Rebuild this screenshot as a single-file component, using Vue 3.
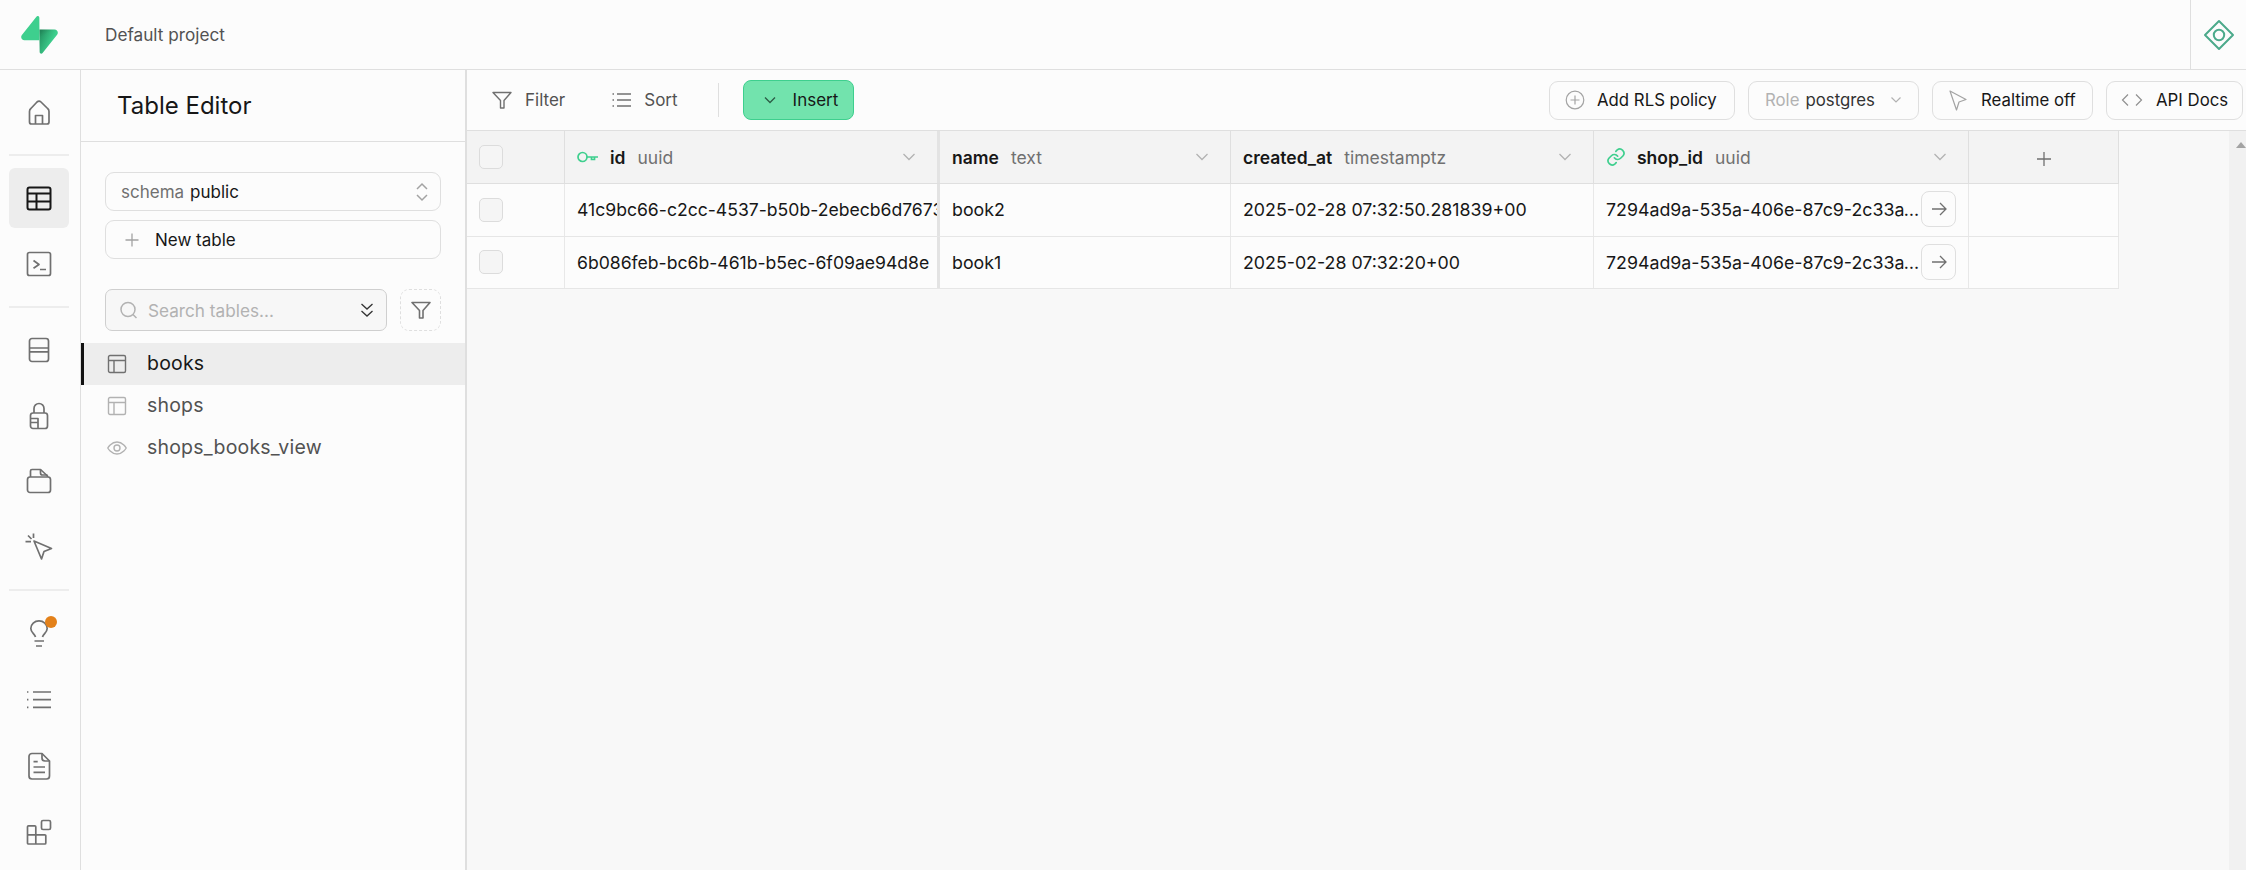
<script setup>
const rows = [
  { id: '41c9bc66-c2cc-4537-b50b-2ebecb6d7673', name: 'book2', created: '2025-02-28 07:32:50.281839+00', shop: '7294ad9a-535a-406e-87c9-2c33a1f0b6de' },
  { id: '6b086feb-bc6b-461b-b5ec-6f09ae94d8e', name: 'book1', created: '2025-02-28 07:32:20+00', shop: '7294ad9a-535a-406e-87c9-2c33a1f0b6de' }
]
</script>

<template>
  <div class="app">
    <header class="top">
      <div class="logo">
        <svg width="37" height="38" viewBox="0 0 109 113" fill="none">
          <defs>
            <linearGradient id="lg" x1="53.97" y1="54.97" x2="94.16" y2="71.83" gradientUnits="userSpaceOnUse">
              <stop stop-color="#249361" /><stop offset="1" stop-color="#3ECF8E" />
            </linearGradient>
            <linearGradient id="lg2" x1="36.16" y1="30.58" x2="54.48" y2="65.08" gradientUnits="userSpaceOnUse">
              <stop /><stop offset="1" stop-opacity="0" />
            </linearGradient>
          </defs>
          <path d="M63.7 110.3C60.85 113.9 55.05 111.9 54.98 107.3L53.97 40.06H99.19C107.38 40.06 111.95 49.52 106.86 55.94L63.7 110.3Z" fill="url(#lg)" />
          <path d="M63.7 110.3C60.85 113.9 55.05 111.9 54.98 107.3L53.97 40.06H99.19C107.38 40.06 111.95 49.52 106.86 55.94L63.7 110.3Z" fill="url(#lg2)" fill-opacity=".2" />
          <path d="M45.32 2.07C48.18 -1.53 53.97 .44 54.04 5.04L54.48 72.29H9.83C1.64 72.29 -2.93 62.83 2.17 56.42L45.32 2.07Z" fill="#3ECF8E" />
        </svg>
      </div>
      <div class="project">Default project</div>
      <div class="top-right">
        <svg width="32" height="32" viewBox="0 0 32 32" fill="none" stroke="#4caa8b" stroke-width="2"><path d="M16 2 30 16 16 30 2 16Z" stroke-linejoin="round" /><circle cx="16" cy="16" r="5.2" /></svg>
      </div>
    </header>

    <div class="body">
      <nav class="nav">
        <a class="nb"><svg class="ni" viewBox="0 0 28 28"><path d="M4.5 13.5c0-1.2.5-2.3 1.4-3L12 4c1.2-1.1 2.9-1.1 4 0l6.600 6.500c.9.700 1.400 1.800 1.400 3V24a2 2 0 0 1-2 2H6.500a2 2 0 0 1-2-2Z" /><path d="M10.500 26V17.500h7V26" /></svg></a>
        <i class="sep"></i>
        <div class="grp">
          <a class="nb on"><svg class="ni" viewBox="0 0 28 28"><rect x="2.500" y="3.500" width="23" height="22" rx="2" /><path d="M2.500 9.500h23M2.500 17.500h23M11.500 9.500v16" /></svg></a>
          <a class="nb"><svg class="ni" viewBox="0 0 28 28"><rect x="2.500" y="2.500" width="23" height="23" rx="2" /><path d="M8.500 10.500l5.500 4-5.500 3.700M15 19.500h6" /></svg></a>
        </div>
        <i class="sep"></i>
        <div class="grp g2">
          <a class="nb"><svg class="ni" viewBox="0 0 28 28"><rect x="4.500" y="2.500" width="19" height="23" rx="2.500" /><path d="M4.500 12h19M4.500 15.800h19" /></svg></a>
          <a class="nb"><svg class="ni" viewBox="0 0 28 28"><path d="M9 11V6.500a5 5 0 0 1 10 0V11" /><rect x="5.500" y="11" width="17" height="15.500" rx="2.500" /><path d="M6 16.500h7v9.500M6 20.500h7" /></svg></a>
          <a class="nb"><svg class="ni" viewBox="0 0 28 28"><rect x="2.500" y="10" width="23" height="15.500" rx="2.500" /><path d="M5.500 10V4a1.500 1.500 0 0 1 1.500-1.500h8.500l7 6.500v1" /><path d="M15.500 2.500V6a2 2 0 0 0 2 2h5" /></svg></a>
          <a class="nb"><svg class="ni" viewBox="0 0 28 28"><path d="M9 8l17.500 7.500-7.500 3-2.500 7.500Z" /><path d="M.5 8.700h5.500M3 2.500l3.500 3.500M8.500.5V5" /></svg></a>
        </div>
        <i class="sep"></i>
        <div class="grp g3">
          <a class="nb"><svg class="ni" viewBox="0 0 28 28"><path d="M10.500 18c-.500-3-4.700-4.500-4.700-8.500a8.200 7.700 0 0 1 16.400 0c0 4-4.200 5.500-4.700 8.500" /><path d="M9.500 22h9.500M11 27h6" /></svg><span class="badge"></span></a>
          <a class="nb"><svg class="ni" viewBox="0 0 28 28"><path d="M8 6h18M8 13.700h18M8 21.300h18" /><path class="dot" d="M2 6h1.400M2 13.700h1.400M2 21.300h1.400" /></svg></a>
          <a class="nb"><svg class="ni" viewBox="0 0 28 28"><path d="M7 1.500h10l7.500 7.500v15a3 3 0 0 1-3 3H7a3 3 0 0 1-3-3V4.500a3 3 0 0 1 3-3Z" /><path d="M17 1.500V6a3 3 0 0 0 3 3h4.500M8.500 9.700h4.200M8.500 15h11.500M8.500 20.300h11.500" /></svg></a>
          <a class="nb"><svg class="ni" viewBox="0 0 28 28"><rect x="16.500" y="1.500" width="9" height="9" rx="1.500" /><path d="M3.500 6.800H9.800a1 1 0 0 1 1 1V15.800H19.800a1 1 0 0 1 1 1V24a1 1 0 0 1-1 1H3.500a1 1 0 0 1-1-1V7.800a1 1 0 0 1 1-1ZM2.500 15.800h8.300V25" /></svg></a>
        </div>
      </nav>

      <aside class="side">
        <div class="side-title"><h1>Table Editor</h1></div>
        <div class="side-controls">
          <div class="field">
            <span class="muted">schema</span><span class="strong">public</span>
            <svg class="updown" width="14" height="20" viewBox="0 0 14 20" fill="none" stroke="#a3a3a3" stroke-width="1.500"><path d="M2 7l5-5 5 5M2 13l5 5 5-5" /></svg>
          </div>
          <div class="field newt">
            <svg width="16" height="16" viewBox="0 0 16 16" fill="none" stroke="#a3a3a3" stroke-width="1.300"><path d="M8 1.500v13M1.500 8h13" /></svg>
            <span class="strong">New table</span>
          </div>
          <div class="search-row">
            <div class="search">
              <svg width="20" height="20" viewBox="0 0 20 20" fill="none" stroke="#b2b2b2" stroke-width="1.500"><circle cx="9" cy="9.500" r="7" /><path d="M14 14.500l3.500 3.500" /></svg>
              <span class="ph">Search tables...</span>
              <svg class="ddown" width="14" height="16" viewBox="0 0 14 16" fill="none" stroke="#333" stroke-width="1.300"><path d="M1.500 2l5.500 5 5.500-5M1.500 9l5.500 5 5.500-5" /></svg>
            </div>
            <div class="fbtn">
              <svg width="20" height="20" viewBox="0 0 20 20" fill="none" stroke="#707070" stroke-width="1.600" stroke-linejoin="round"><path d="M1 2.500h18l-7 8v7.500h-3.500v-7.500Z" /></svg>
            </div>
          </div>
        </div>
        <ul class="tables">
          <li class="sel"><svg class="ti dark" viewBox="0 0 20 20"><rect x="1.500" y="1.500" width="17" height="17" rx="1.500" /><path d="M1.500 6.500h17M7 6.500v12" /></svg><span>books</span></li>
          <li><svg class="ti" viewBox="0 0 20 20"><rect x="1.500" y="1.500" width="17" height="17" rx="1.500" /><path d="M1.500 6.500h17M7 6.500v12" /></svg><span>shops</span></li>
          <li><svg class="ti" viewBox="0 0 20 20"><path d="M.8 10S4 4 10 4s9.200 6 9.200 6-3.200 6-9.200 6S.8 10 .8 10Z" /><circle cx="10" cy="10" r="3" /></svg><span>shops_books_view</span></li>
        </ul>
      </aside>

      <main class="main">
        <div class="toolbar">
          <button class="tb f"><svg width="20" height="20" viewBox="0 0 20 20" fill="none" stroke="#707070" stroke-width="1.400" stroke-linejoin="round"><path d="M1 2.500h18l-7 8v7.500h-3.500v-7.500Z" /></svg>Filter</button>
          <button class="tb s"><svg width="20" height="16" viewBox="0 0 20 16" fill="none" stroke="#707070" stroke-width="1.400"><path d="M5 2h14M5 8h14M5 14h14M.5 2h1.500M.5 8h1.500M.5 14h1.500" /></svg>Sort</button>
          <i class="vdiv"></i>
          <button class="insert"><svg width="14" height="9" viewBox="0 0 14 9" fill="none" stroke="#2c5c46" stroke-width="1.300"><path d="M2 1.500l5 5 5-5" /></svg>Insert</button>
          <div class="actions">
            <button class="ab rls"><svg width="20" height="20" viewBox="0 0 20 20" fill="none" stroke="#a3a3a3" stroke-width="1.200"><circle cx="10" cy="10" r="8.800" /><path d="M10 5.500v9M5.500 10h9" /></svg>Add RLS policy</button>
            <button class="ab role"><span class="lt">Role</span><span>postgres</span><svg width="12" height="8" viewBox="0 0 12 8" fill="none" stroke="#b2b2b2" stroke-width="1.200"><path d="M1.500 1.500L6 6l4.500-4.500" /></svg></button>
            <button class="ab rt"><svg width="20" height="24" viewBox="0 0 20 24" fill="none" stroke="#a3a3a3" stroke-width="1.200" stroke-linejoin="round"><path d="M2 3l16 8.500-7 2.500-2.500 8Z" /></svg>Realtime off</button>
            <button class="ab api"><svg width="22" height="14" viewBox="0 0 22 14" fill="none" stroke="#909090" stroke-width="1.200"><path d="M7 1.500L1.500 7 7 12.500M15 1.500L20.500 7 15 12.500" /></svg>API Docs</button>
          </div>
        </div>

        <div class="grid-wrap">
          <div class="grid">
            <div class="hd row">
              <div class="c"><span class="chk"></span></div>
              <div class="c frozen"><svg class="k" width="22" height="14" viewBox="0 0 22 14" fill="none" stroke="#3ecf8e" stroke-width="1.700"><circle cx="5.500" cy="7" r="4.500" /><path d="M10 7h11M14.500 7v2.500h3V7" /></svg><b>id</b><em>uuid</em><svg class="chev" width="14" height="8" viewBox="0 0 14 8" fill="none" stroke="#b2b2b2" stroke-width="1.300"><path d="M1.500 1L7 6.500 12.500 1" /></svg></div>
              <div class="c"><b>name</b><em>text</em><svg class="chev" width="14" height="8" viewBox="0 0 14 8" fill="none" stroke="#b2b2b2" stroke-width="1.300"><path d="M1.500 1L7 6.500 12.500 1" /></svg></div>
              <div class="c"><b>created_at</b><em>timestamptz</em><svg class="chev" width="14" height="8" viewBox="0 0 14 8" fill="none" stroke="#b2b2b2" stroke-width="1.300"><path d="M1.500 1L7 6.500 12.500 1" /></svg></div>
              <div class="c"><svg class="k lk" width="20" height="20" viewBox="0 0 24 24" fill="none" stroke="#3ecf8e" stroke-width="2" stroke-linecap="round"><path d="M10 13a5 5 0 0 0 7.500.5l3-3a5 5 0 0 0-7-7l-1.700 1.700" /><path d="M14 11a5 5 0 0 0-7.500-.5l-3 3a5 5 0 0 0 7 7l1.700-1.700" /></svg><b>shop_id</b><em>uuid</em><svg class="chev" width="14" height="8" viewBox="0 0 14 8" fill="none" stroke="#b2b2b2" stroke-width="1.300"><path d="M1.500 1L7 6.500 12.500 1" /></svg></div>
              <div class="c add"><svg width="16" height="16" viewBox="0 0 16 16" fill="none" stroke="#707070" stroke-width="1.300"><path d="M8 1v14M1 8h14" /></svg></div>
            </div>
            <div v-for="r in rows" :key="r.id" class="dr row">
              <div class="c"><span class="chk"></span></div>
              <div class="c frozen"><span class="clip">{{ r.id }}</span></div>
              <div class="c">{{ r.name }}</div>
              <div class="c">{{ r.created }}</div>
              <div class="c shop"><span class="ell">{{ r.shop }}</span><span class="go"><svg width="18" height="16" viewBox="0 0 18 16" fill="none" stroke="#707070" stroke-width="1.300"><path d="M2 8h14M10 2l6 6-6 6" /></svg></span></div>
              <div class="c"></div>
            </div>
          </div>
          <div class="scroll"><i class="arrow"></i></div>
        </div>
      </main>
    </div>
  </div>
</template>

<style scoped>
.app { width: 2246px; height: 870px; display: flex; flex-direction: column; overflow: hidden; background: #fcfcfc; font-family: Inter, "Noto Sans", sans-serif; color: #171717; font-size: 18px; }
.top { height: 70px; flex: none; display: flex; align-items: center; border-bottom: 1px solid #dfdfdf; box-sizing: border-box; }
.logo { width: 105px; padding-left: 21px; box-sizing: border-box; display: flex; flex: none; }
.project { font-size: 17.200px; color: #525252; }
.top-right { margin-left: auto; width: 56px; height: 69px; border-left: 1px solid #dfdfdf; box-sizing: border-box; display: flex; align-items: center; justify-content: center; }
.body { flex: 1; display: flex; min-height: 0; }
.nav { width: 81px; flex: none; box-sizing: border-box; border-right: 1px solid #dfdfdf; padding: 12px 11px 0 9px; display: flex; flex-direction: column; gap: 6px; }
.grp { display: flex; flex-direction: column; gap: 6px; }
.g2 { gap: 5.700px; }
.g3 { gap: 6.700px; }
.nb { position: relative; height: 60px; width: 60px; flex: none; display: flex; align-items: center; justify-content: center; border-radius: 6px; }
.nb.on { background: #ededed; }
.ni { width: 28px; height: 28px; fill: none; stroke: #707070; stroke-width: 1.700; stroke-linejoin: round; overflow: visible; }
.on .ni { stroke: #171717; stroke-width: 2; }
.dot { stroke-width: 1.700; }
.sep { display: block; height: 2px; background: #ededed; margin: 6px 0; flex: none; }
.badge { position: absolute; left: 36px; top: 13px; width: 12px; height: 12px; border-radius: 50%; background: #e3811a; }
.side { width: 386px; flex: none; box-sizing: border-box; border-right: 2px solid #dfdfdf; display: flex; flex-direction: column; }
.side-title { height: 72px; box-sizing: border-box; border-bottom: 1px solid #dfdfdf; display: flex; align-items: center; padding-left: 36px; flex: none; }
h1 { margin: 0; font-size: 24px; font-weight: 400; }
.side-controls { padding: 30px 24px 0; display: flex; flex-direction: column; gap: 9px; }
.field { height: 39px; box-sizing: border-box; border: 1px solid #dfdfdf; border-radius: 9px; display: flex; align-items: center; padding-left: 15px; font-size: 17px; background: #fcfcfc; }
.muted { color: #707070; margin-right: 6px; }
.updown { margin-left: auto; margin-right: 11px; }
.newt { padding-left: 18px; gap: 15px; }
.search-row { display: flex; gap: 13px; margin-top: 21px; }
.search { flex: 1; height: 42px; box-sizing: border-box; border: 1px solid #cfcfcf; border-radius: 7px; background: #f7f7f7; display: flex; align-items: center; padding: 0 12px 0 13px; gap: 9px; }
.ph { color: #b2b2b2; font-size: 17.200px; }
.ddown { margin-left: auto; }
.fbtn { width: 41px; height: 42px; box-sizing: border-box; border: 1px dashed #dfdfdf; border-radius: 9px; display: flex; align-items: center; justify-content: center; }
.tables { list-style: none; margin: 12px 0 0; padding: 0; }
.tables li { height: 42px; box-sizing: border-box; display: flex; align-items: center; padding-left: 26px; gap: 20px; font-size: 19.500px; letter-spacing: .2px; color: #525252; padding-bottom: 2px; }
.tables li.sel { background: #ededed; color: #171717; border-left: 3px solid #111; padding-left: 23px; }
.ti { width: 20px; height: 20px; fill: none; stroke: #b2b2b2; stroke-width: 1.400; flex: none; position: relative; top: 1px; }
.ti.dark { stroke: #707070; }
.main { flex: 1; min-width: 0; display: flex; flex-direction: column; background: #f8f8f8; }
.toolbar { height: 61px; flex: none; box-sizing: border-box; border-bottom: 1px solid #dfdfdf; background: #fcfcfc; display: flex; align-items: center; }
button { font: inherit; color: inherit; background: none; border: 0; padding: 0; display: flex; align-items: center; font-size: 17px; }
.tb { color: #525252; gap: 13px; }
.f { margin-left: 25px; }
.s { margin-left: 47px; gap: 12px; }
.vdiv { width: 1px; height: 34px; background: #dfdfdf; margin-left: 40px; }
.insert { margin-left: 24px; width: 111px; height: 40px; box-sizing: border-box; border: 1px solid #3ecf8e; border-radius: 8px; background: #72e3ad; padding-left: 19px; gap: 16px; }
.actions { margin-left: auto; margin-right: 3px; display: flex; gap: 13px; }
.ab { height: 39px; box-sizing: border-box; border: 1px solid #dfdfdf; border-radius: 9px; background: #fcfcfc; color: #171717; white-space: nowrap; font-size: 16.800px; }
.rls { width: 186px; padding-left: 15px; gap: 12px; }
.role { width: 171px; padding-left: 16px; gap: 6px; color: #333; }
.role svg { margin-left: 9px; }
.lt { color: #b2b2b2; }
.rt { width: 161px; padding-left: 15px; gap: 13px; }
.api { width: 137px; padding-left: 14px; gap: 13px; }
.grid-wrap { flex: 1; display: flex; min-height: 0; }
.grid { flex: 1; min-width: 0; }
.scroll { width: 17px; background: #f1f1f1; display: flex; justify-content: flex-end; padding-top: 11px; box-sizing: border-box; }
.arrow { width: 0; height: 0; border-left: 5px solid transparent; border-right: 5px solid transparent; border-bottom: 6px solid #a3a3a3; }
.row { display: grid; grid-template-columns: 98px 375px 291px 363px 375px 150px; width: 1652px; box-sizing: border-box; border-bottom: 1px solid #e6e6e6; background: #fcfcfc; }
.hd { height: 53px; background: #f3f3f3; border-bottom-color: #dfdfdf; }
.dr { height: 52.500px; }
.c { display: flex; align-items: center; box-sizing: border-box; border-right: 1px solid #e8e8e8; padding-left: 12px; font-size: 17.800px; min-width: 0; white-space: nowrap; position: relative; overflow: hidden; }
.hd .c { border-right-color: #dfdfdf; font-size: 17.500px; }
.frozen { border-right: 3px solid #e3e3e3 !important; }
.chk { width: 24px; height: 24px; box-sizing: border-box; border: 1px solid #dcdcdc; border-radius: 5px; background: #f5f5f5; }
b { font-weight: 600; }
em { font-style: normal; color: #707070; margin-left: 12px; }
.k { margin-right: 11px; flex: none; }
.chev { position: absolute; top: 22px; right: 21px; }
.add { justify-content: center; padding: 0; padding-top: 4px; }
.clip { overflow: hidden; font-size: 17.600px; }
.shop { padding-right: 46px; }
.ell { overflow: hidden; text-overflow: ellipsis; }
.go { position: absolute; right: 12px; top: 7px; width: 35px; height: 36px; box-sizing: border-box; border: 1px solid #dfdfdf; border-radius: 8px; background: #fcfcfc; display: flex; align-items: center; justify-content: center; }
</style>

<style>
html, body { margin: 0; background: #fcfcfc; }
</style>
